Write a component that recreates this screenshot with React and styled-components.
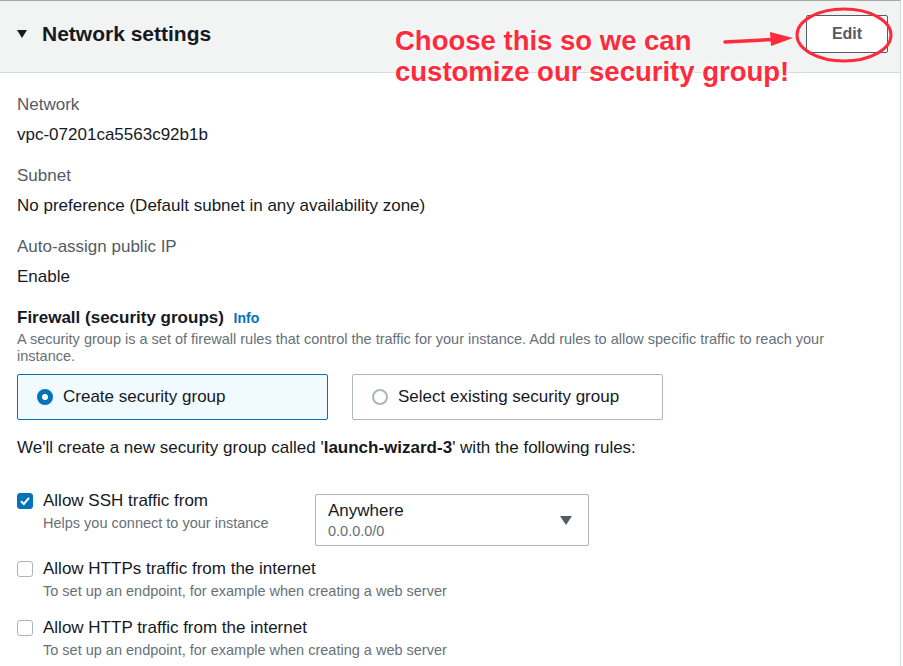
import React from 'react';
import styled, { createGlobalStyle } from 'styled-components';

const GlobalStyle = createGlobalStyle`
  body {
    margin: 0;
    background: #fff;
    font-family: "Liberation Sans", Arial, sans-serif;
    color: #16191f;
  }
`;

const rules = [
  {
    id: 'ssh',
    label: 'Allow SSH traffic from',
    hint: 'Helps you connect to your instance',
    checked: true,
    source: { name: 'Anywhere', cidr: '0.0.0.0/0' },
  },
  {
    id: 'https',
    label: 'Allow HTTPs traffic from the internet',
    hint: 'To set up an endpoint, for example when creating a web server',
  },
  {
    id: 'http',
    label: 'Allow HTTP traffic from the internet',
    hint: 'To set up an endpoint, for example when creating a web server',
  },
];

const App = () => (
  <>
    <GlobalStyle />
    <Panel>
      <Header>
        <Title>
          <Caret />
          Network settings
        </Title>
        <EditButton>Edit</EditButton>
      </Header>

      <Body>
        <Field>
          <Label>Network</Label>
          <Value>vpc-07201ca5563c92b1b</Value>
        </Field>
        <Field>
          <Label>Subnet</Label>
          <Value>No preference (Default subnet in any availability zone)</Value>
        </Field>
        <Field>
          <Label>Auto-assign public IP</Label>
          <Value>Enable</Value>
        </Field>

        <Heading>
          Firewall (security groups) <InfoLink>Info</InfoLink>
        </Heading>
        <Description>
          A security group is a set of firewall rules that control the traffic for your instance. Add rules to
          allow specific traffic to reach your instance.
        </Description>

        <Tiles>
          <Tile selected>
            <Radio selected />
            Create security group
          </Tile>
          <Tile>
            <Radio />
            Select existing security group
          </Tile>
        </Tiles>

        <Notice>
          We'll create a new security group called '<b>launch-wizard-3</b>' with the following rules:
        </Notice>

        <RuleList>
          {rules.map((rule) => (
            <RuleRow key={rule.id}>
              <RuleLeft>
                <CheckLine>
                  <Checkbox checked={rule.checked}>
                    {rule.checked && (
                      <svg width="12" height="12" viewBox="0 0 12 12">
                        <path d="M2 6.2 L4.8 9 L10 2.8" fill="none" stroke="#fff" strokeWidth="2" />
                      </svg>
                    )}
                  </Checkbox>
                  <RuleLabel>{rule.label}</RuleLabel>
                </CheckLine>
                <Hint>{rule.hint}</Hint>
              </RuleLeft>
              {rule.source && (
                <Select>
                  <div>
                    <SelectValue>{rule.source.name}</SelectValue>
                    <SelectSub>{rule.source.cidr}</SelectSub>
                  </div>
                  <SelectArrow />
                </Select>
              )}
            </RuleRow>
          ))}
        </RuleList>
      </Body>

      <Callout>
        Choose this so we can
        <br />
        customize our security group!
      </Callout>
      <Marker width="903" height="80" viewBox="0 0 903 80">
        <path d="M725 41 L772 38.5" stroke="#ff2b3c" strokeWidth="3.5" strokeLinecap="round" />
        <path d="M770 31 L793 37 L771 45 Z" fill="#ff2b3c" />
        <ellipse cx="844" cy="34" rx="47" ry="26" fill="none" stroke="#ff2b3c" strokeWidth="3" />
      </Marker>
    </Panel>
  </>
);

const Panel = styled.div`
  position: relative;
  width: 900px;
  min-height: 665px;
  border-top: 1px solid #a9a9a9;
  border-right: 1px solid #d5dbdb;
  overflow: hidden;
`;

const Header = styled.div`
  height: 66px;
  display: flex;
  align-items: center;
  justify-content: space-between;
  padding: 0 12px 5px 17px;
  background: #f2f3f3;
  border-bottom: 1px solid #d5dbdb;
`;

const Title = styled.h2`
  display: flex;
  align-items: center;
  gap: 15px;
  margin: 0;
  font-size: 21px;
  font-weight: 700;
  color: #16191f;
`;

const Caret = styled.span`
  width: 0;
  height: 0;
  border-left: 5px solid transparent;
  border-right: 5px solid transparent;
  border-top: 8px solid #16191f;
`;

const EditButton = styled.button`
  width: 82px;
  height: 38px;
  background: #fff;
  border: 1px solid #545b64;
  border-radius: 2px;
  font-family: inherit;
  font-size: 16px;
  font-weight: 700;
  color: #545b64;
`;

const Body = styled.div`
  padding: 21px 17px 0;
`;

const Field = styled.div`
  margin-bottom: 19px;
`;

const Label = styled.div`
  font-size: 17px;
  line-height: 22px;
  color: #545b64;
  margin-bottom: 8px;
`;

const Value = styled.div`
  font-size: 17px;
  line-height: 22px;
  color: #16191f;
`;

const Heading = styled.div`
  font-size: 17px;
  line-height: 22px;
  font-weight: 700;
`;

const InfoLink = styled.span`
  margin-left: 5px;
  font-size: 14px;
  font-weight: 700;
  color: #0073bb;
`;

const Description = styled.div`
  margin-top: 2px;
  font-size: 14.5px;
  line-height: 17px;
  color: #687078;
  max-width: 840px;
`;

const Tiles = styled.div`
  display: flex;
  gap: 24px;
  margin-top: 9px;
`;

const Tile = styled.div`
  width: 311px;
  height: 46px;
  box-sizing: border-box;
  display: flex;
  align-items: center;
  gap: 10px;
  padding: 0 19px;
  font-size: 17px;
  color: #16191f;
  background: ${(p) => (p.selected ? '#f1faff' : '#fff')};
  border: 1px solid ${(p) => (p.selected ? '#0073bb' : '#aab7b8')};
  border-radius: 2px;
`;

const Radio = styled.span`
  width: 16px;
  height: 16px;
  flex: none;
  box-sizing: border-box;
  border-radius: 50%;
  background: #fff;
  border: ${(p) => (p.selected ? '5px solid #0073bb' : '2px solid #aab7b8')};
`;

const Notice = styled.div`
  margin-top: 17px;
  font-size: 17px;
  line-height: 22px;
  b {
    font-weight: 700;
  }
`;

const RuleList = styled.div`
  display: flex;
  flex-direction: column;
  gap: 12px;
  margin-top: 31px;
`;

const RuleRow = styled.div`
  display: flex;
  align-items: flex-start;
  gap: 48px;
`;

const RuleLeft = styled.div`
  width: 250px;
  white-space: nowrap;
  padding-bottom: 4px;
`;

const CheckLine = styled.div`
  display: flex;
  align-items: center;
  gap: 10px;
`;

const Checkbox = styled.span`
  width: 16px;
  height: 16px;
  flex: none;
  display: flex;
  align-items: center;
  justify-content: center;
  box-sizing: border-box;
  border-radius: 3px;
  background: ${(p) => (p.checked ? '#0073bb' : '#fff')};
  border: ${(p) => (p.checked ? '1px solid #0073bb' : '1.5px solid #aab7b8')};
`;

const RuleLabel = styled.span`
  font-size: 17px;
  line-height: 22px;
`;

const Hint = styled.div`
  margin: 1px 0 0 26px;
  font-size: 14.5px;
  line-height: 20px;
  color: #687078;
`;

const Select = styled.div`
  width: 274px;
  height: 52px;
  box-sizing: border-box;
  margin-top: 4px;
  display: flex;
  align-items: center;
  justify-content: space-between;
  padding: 0 16px 0 12px;
  border: 1px solid #aab7b8;
  border-radius: 2px;
`;

const SelectValue = styled.div`
  font-size: 17px;
  line-height: 21px;
`;

const SelectSub = styled.div`
  font-size: 14.5px;
  line-height: 20px;
  color: #687078;
`;

const SelectArrow = styled.span`
  width: 0;
  height: 0;
  border-left: 6px solid transparent;
  border-right: 6px solid transparent;
  border-top: 9px solid #545b64;
`;

const Callout = styled.div`
  position: absolute;
  left: 395px;
  top: 24px;
  font-size: 27.5px;
  line-height: 31px;
  font-weight: 700;
  color: #ff2b3c;
  text-shadow: 0 0 3px #fff, 0 0 6px #fff;
`;

const Marker = styled.svg`
  position: absolute;
  left: 0;
  top: 0;
  pointer-events: none;
`;

export default App;
